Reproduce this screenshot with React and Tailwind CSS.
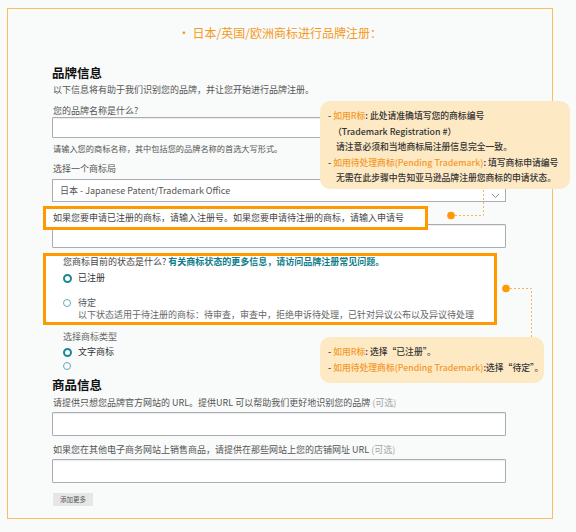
import React from 'react';

const FONT = { fontFamily: '"Noto Sans CJK SC", "Noto Sans", sans-serif' };

// Radio circle: thick = selected-looking ring, thin = idle ring
function Radio({ thick }) {
  return thick ? (
    <span className="inline-block w-[9px] h-[9px] rounded-full border-[2px] border-[#1b8794] shrink-0" />
  ) : (
    <span className="inline-block w-[8px] h-[8px] rounded-full border border-[#5cb0bb] shrink-0" />
  );
}

function Input({ className = '' }) {
  return (
    <div className={`w-[454px] bg-white border border-[#a9adb3] rounded-[1px] shadow-[inset_0_1px_1px_rgba(0,0,0,0.08)] ${className}`} />
  );
}

export default function App() {
  return (
    <div className="relative w-[576px] h-[532px] bg-[#f9fafa] text-[#555] overflow-hidden" style={FONT}>
      {/* --- Marco principal --- */}
      <div className="absolute left-[7px] top-[8px] w-[546px] h-[511px] border border-[#fbbd62]">
        <div className="mt-[16px] text-center text-[12px] leading-[16px] text-[#f39a1e]">
          •&#8201;日本/英国/欧洲商标进行品牌注册：
        </div>

        <div className="pl-[44px]">
          {/* --- Marca --- */}
          <div className="mt-[24px] text-[12.5px] leading-[16px] font-bold text-[#111]">品牌信息</div>
          <div className="mt-[3px] text-[9px] leading-[12px] pl-[1px]">以下信息将有助于我们识别您的品牌，并让您开始进行品牌注册。</div>

          <div className="mt-[9px] text-[9px] leading-[12px] pl-[1px]">您的品牌名称是什么?</div>
          <Input className="h-[21px]" />
          <div className="mt-[4px] text-[8.2px] leading-[12px] pl-[1px]">请输入您的商标名称，其中包括您的品牌名称的首选大写形式。</div>

          <div className="mt-[9px] text-[9px] leading-[12px] pl-[1px]">选择一个商标局</div>
          <div className="mt-[4px] w-[454px] h-[23px] bg-white border border-[#a9adb3] flex items-center justify-between pl-[7px] pr-[5px]">
            <span className="text-[9px] text-[#555]">日本 - Japanese Patent/Trademark Office</span>
            <svg width="9" height="6" viewBox="0 0 9 6" className="mt-[10px]">
              <path d="M1 1 L4.5 4.5 L8 1" fill="none" stroke="#8a8f96" strokeWidth="1" />
            </svg>
          </div>

          {/* --- Número de registro (resaltado) --- */}
          <div className="relative z-10 mt-[4px] -ml-[9px] w-[385px] h-[24px] border-[3px] border-[#ff9900] bg-white flex items-center pl-[7px] text-[9px] text-[#444]">
            如果您要申请已注册的商标，请输入注册号。如果您要申请待注册的商标，请输入申请号
          </div>
          <Input className="h-[24px] -mt-[6px]" />

          {/* --- Estado de la marca (resaltado) --- */}
          <div className="mt-[5px] -ml-[9px] w-[454px] h-[72px] border-[3px] border-[#ff9900] bg-white pl-[17px] text-[9px] leading-[12px]">
            <div className="text-[#444]">
              您商标目前的状态是什么? <span className="text-[#0f7d89] font-semibold">有关商标状态的更多信息，请访问品牌注册常见问题。</span>
            </div>
            <div className="mt-[4px] flex items-center gap-[6px] text-[#333]">
              <Radio thick />
              <span>已注册</span>
            </div>
            <div className="mt-[13px] flex items-center gap-[7px] text-[#555]">
              <Radio />
              <span>待定</span>
            </div>
            <div className="pl-[15px] text-[#666]">以下状态适用于待注册的商标：待审查，审查中，拒绝申诉待处理，已针对异议公布以及异议待处理</div>
          </div>

          {/* --- Tipo de marca --- */}
          <div className="pl-[11px] text-[9px] leading-[12px]">
            <div className="mt-[6px] text-[#666]">选择商标类型</div>
            <div className="mt-[3px] flex items-center gap-[6px] text-[#333]">
              <Radio thick />
              <span>文字商标</span>
            </div>
            <div className="mt-[2px] flex items-center h-[12px]">
              <Radio />
            </div>
          </div>

          {/* --- Productos --- */}
          <div className="mt-[5px] text-[12.5px] leading-[16px] font-bold text-[#111]">商品信息</div>
          <div className="mt-[4px] text-[9px] leading-[12px] pl-[1px]">
            请提供只想您品牌官方网站的 URL。提供URL 可以帮助我们更好地识别您的品牌 <span className="text-[#a3a3a3]">(可选)</span>
          </div>
          <Input className="h-[24px] mt-[3px]" />
          <div className="mt-[8px] text-[9px] leading-[12px] pl-[1px]">
            如果您在其他电子商务网站上销售商品，请提供在那些网站上您的店铺网址 URL <span className="text-[#a3a3a3]">(可选)</span>
          </div>
          <Input className="h-[24px] mt-[3px]" />

          <button type="button" className="mt-[7px] ml-[1px] w-[40px] h-[13px] bg-[#e6e6e6] text-[6.5px] leading-[13px] text-[#555]">
            添加更多
          </button>
        </div>
      </div>

      {/* --- Nota 1 --- */}
      <div className="absolute left-[320px] top-[101px] w-[250px] h-[88px] rounded-[10px] bg-[#fde9c4] pl-[8px] pt-[7px] text-[8.8px] leading-[15.5px] font-medium text-[#333]">
        <div>- <span className="text-[#f39a2b]">如用R标</span>: 此处请准确填写您的商标编号</div>
        <div className="pl-[5px]">（Trademark Registration #）</div>
        <div className="pl-[8px]">请注意必须和当地商标局注册信息完全一致。</div>
        <div>- <span className="text-[#f39a2b]">如用待处理商标(Pending Trademark)</span>: 填写商标申请编号</div>
        <div className="pl-[8px]">无需在此步骤中告知亚马逊品牌注册您商标的申请状态。</div>
      </div>

      {/* --- Nota 2 --- */}
      <div className="absolute left-[320px] top-[337px] w-[224px] h-[46px] rounded-[10px] bg-[#fde9c4] pl-[8px] pt-[7px] text-[8.8px] leading-[16px] font-medium text-[#333]">
        <div>- <span className="text-[#f39a2b]">如用R标</span>: 选择“已注册”。</div>
        <div>- <span className="text-[#f39a2b]">如用待处理商标(Pending Trademark)</span>:选择“待定”。</div>
      </div>

      {/* --- Conectores punteados --- */}
      <svg className="absolute left-0 top-0 pointer-events-none" width="576" height="532">
        <path d="M451 215.5 H483.5 V189" fill="none" stroke="#f7b45a" strokeWidth="1" strokeDasharray="2 2" />
        <circle cx="451" cy="215.5" r="3.8" fill="#ff9900" />
        <path d="M506 288.5 H531.5 V337" fill="none" stroke="#f7b45a" strokeWidth="1" strokeDasharray="2 2" />
        <circle cx="506" cy="288.5" r="3.8" fill="#ff9900" />
      </svg>
    </div>
  );
}
